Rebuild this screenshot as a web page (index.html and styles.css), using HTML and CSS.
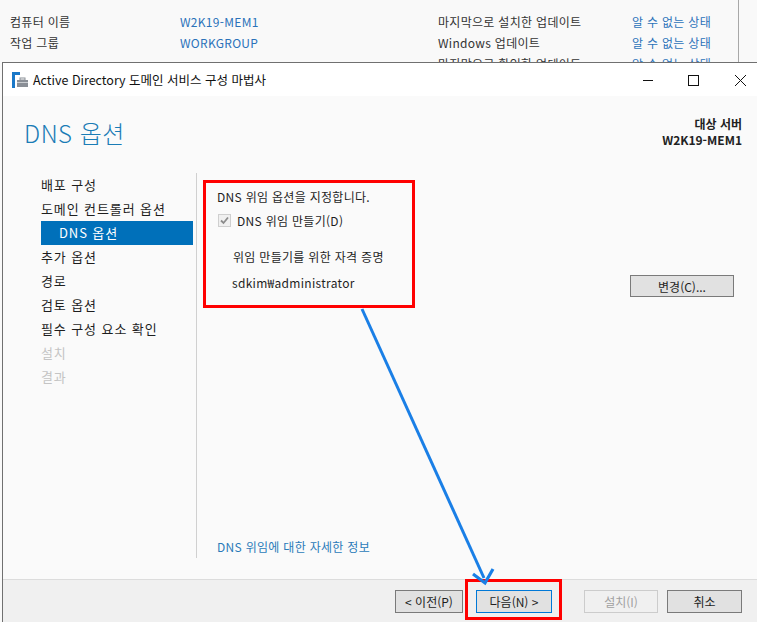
FILE: index.html
```html
<!DOCTYPE html>
<html lang="ko">
<head>
<meta charset="utf-8">
<title>Active Directory 도메인 서비스 구성 마법사</title>
<link rel="stylesheet" href="styles.css">
</head>
<body>
<div class="desk">
  <div class="props">
    <div class="prow"><span class="pl">컴퓨터 이름</span><span class="pv">W2K19-MEM1</span><span class="pl2">마지막으로 설치한 업데이트</span><span class="pv2">알 수 없는 상태</span></div>
    <div class="prow"><span class="pl">작업 그룹</span><span class="pv">WORKGROUP</span><span class="pl2">Windows 업데이트</span><span class="pv2">알 수 없는 상태</span></div>
    <div class="prow"><span class="pl"></span><span class="pv"></span><span class="pl2">마지막으로 확인한 업데이트</span><span class="pv2">알 수 없는 상태</span></div>
  </div>
  <div class="vline"></div>
</div>
<div class="window">
  <div class="titlebar">
    <svg class="appicon" width="16" height="16" viewBox="0 0 16 16">
      <rect x="0" y="0" width="3" height="16" fill="#1a78c8"/>
      <rect x="0" y="0" width="8" height="3" fill="#1a78c8"/>
      <rect x="5" y="8" width="11" height="7" fill="#8a8f96"/>
      <rect x="8" y="6" width="5" height="2" fill="none" stroke="#8a8f96" stroke-width="1"/>
      <rect x="5" y="10" width="11" height="1" fill="#c9ccd0"/>
    </svg>
    <span class="wtitle">Active Directory 도메인 서비스 구성 마법사</span>
    <div class="controls">
      <svg class="ctl" width="46" height="20" viewBox="0 0 46 20"><line x1="18" y1="10.5" x2="28" y2="10.5" stroke="#111" stroke-width="1"/></svg>
      <svg class="ctl" width="46" height="20" viewBox="0 0 46 20"><rect x="17.5" y="5.5" width="10" height="10" fill="none" stroke="#111" stroke-width="1"/></svg>
      <svg class="ctl" width="46" height="20" viewBox="0 0 46 20"><path d="M18 5 L29 16 M29 5 L18 16" stroke="#111" stroke-width="1"/></svg>
    </div>
  </div>
  <div class="wbody">
    <div class="header">
      <h1 class="ptitle">DNS 옵션</h1>
      <div class="target">
        <div>대상 서버</div>
        <div>W2K19-MEM1</div>
      </div>
    </div>
    <div class="main">
      <nav class="nav">
        <div class="nitem">배포 구성</div>
        <div class="nitem">도메인 컨트롤러 옵션</div>
        <div class="nitem sel">DNS 옵션</div>
        <div class="nitem">추가 옵션</div>
        <div class="nitem">경로</div>
        <div class="nitem">검토 옵션</div>
        <div class="nitem">필수 구성 요소 확인</div>
        <div class="nitem dis">설치</div>
        <div class="nitem dis">결과</div>
      </nav>
      <div class="sep"></div>
      <section class="content">
        <div class="toprow">
          <div class="redbox">
            <div class="line l1">DNS 위임 옵션을 지정합니다.</div>
            <label class="line chk"><span class="cbox"><svg width="11" height="11" viewBox="0 0 11 11"><path d="M2 5.5 L4.5 8 L9 2.5" fill="none" stroke="#8c8c8c" stroke-width="1.8"/></svg></span>DNS 위임 만들기(D)</label>
            <div class="line cred">위임 만들기를 위한 자격 증명</div>
            <div class="line user">sdkim₩administrator</div>
          </div>
          <button class="btn change">변경(C)...</button>
        </div>
        <a class="more">DNS 위임에 대한 자세한 정보</a>
      </section>
    </div>
  </div>
  <div class="footer">
    <button class="btn prev">&lt; 이전(P)</button>
    <div class="redwrap"><button class="btn next">다음(N) &gt;</button></div>
    <button class="btn install" disabled>설치(I)</button>
    <button class="btn cancel">취소</button>
  </div>
</div>
<svg class="arrow" width="757" height="622" viewBox="0 0 757 622">
  <line x1="362" y1="309" x2="484" y2="578" stroke="#1a7fe6" stroke-width="3"/>
  <path d="M473 574 L485 583 L493 569" fill="none" stroke="#1a7fe6" stroke-width="3.2" stroke-linejoin="miter"/>
</svg>
</body>
</html>
```

FILE: styles.css
```css
html, body {
  margin: 0;
  padding: 0;
}
body {
  width: 757px;
  height: 622px;
  overflow: hidden;
  background: #f9f9f9;
  font-family: "Noto Sans CJK KR", "Noto Sans", sans-serif;
  font-size: 12px;
  color: #1e1e1e;
  position: relative;
}
.desk {
  height: 62px;
  overflow: hidden;
  display: flex;
}
.props {
  padding-top: 11px;
  width: 738px;
}
.prow {
  display: flex;
  height: 21px;
  line-height: 21px;
  letter-spacing: 0.3px;
}
.pl { width: 170px; padding-left: 10px; color: #333; }
.pv { width: 258px; color: #2b72b9; }
.pl2 { width: 194px; color: #333; }
.pv2 { color: #2b72b9; }
.vline {
  width: 1px;
  background: #a8a8a8;
  height: 62px;
}
.window {
  margin-left: 2px;
  border-top: 1px solid #707070;
  border-left: 1px solid #707070;
  height: 559px;
  display: flex;
  flex-direction: column;
  background: #fafafa;
}
.titlebar {
  height: 33px;
  background: #ffffff;
  display: flex;
  align-items: center;
}
.appicon {
  margin-left: 9px;
  margin-top: 1px;
}
.wtitle {
  margin-left: 5px;
  font-size: 12.5px;
  letter-spacing: 0px;
  color: #111;
}
.controls {
  margin-left: auto;
  display: flex;
  margin-right: -6px;
}
.ctl { display: block; }
.wbody {
  flex: 1;
  display: flex;
  flex-direction: column;
}
.header {
  display: flex;
  justify-content: space-between;
  height: 77px;
}
.ptitle {
  margin: 0;
  margin-left: 21px;
  margin-top: 17px;
  font-weight: 300;
  font-size: 24px;
  line-height: 40px;
  color: #1a7cb6;
  letter-spacing: 0.5px;
}
.target {
  margin-top: 20px;
  margin-right: 15px;
  text-align: right;
  font-weight: bold;
  font-size: 12px;
  line-height: 16px;
  color: #222;
}
.main {
  display: flex;
  height: 385px;
}
.nav {
  margin-left: 38px;
  width: 152px;
}
.nitem {
  height: 24px;
  line-height: 24px;
  font-size: 13px;
  letter-spacing: 0.9px;
  color: #1e1e1e;
}
.nitem.sel {
  background: #0070ba;
  color: #fff;
  padding-left: 18px;
}
.nitem.dis { color: #c4c4c4; }
.sep {
  width: 1px;
  margin-left: 3px;
  background: #d0d0d0;
}
.content {
  flex: 1;
  display: flex;
  flex-direction: column;
  padding-left: 6px;
}
.toprow {
  display: flex;
  justify-content: space-between;
  margin-top: 7px;
}
.redbox {
  width: 206px;
  height: 122px;
  border: 3px solid #ff0000;
}
.line {
  display: flex;
  align-items: center;
  font-size: 12px;
  letter-spacing: 0.3px;
  color: #1e1e1e;
}
.l1 { padding-left: 11px; margin-top: 5px; height: 17px; }
.chk { padding-left: 12px; margin-top: 7px; height: 17px; }
.cbox {
  width: 13px;
  height: 13px;
  border: 1px solid #cfcfcf;
  background: #f0f0f0;
  box-sizing: border-box;
  margin-right: 6px;
  display: flex;
  align-items: center;
  justify-content: center;
}
.cred { padding-left: 27px; margin-top: 19px; height: 17px; }
.user { padding-left: 26px; margin-top: 9px; height: 17px; }
.btn {
  font-family: "Noto Sans CJK KR", "Noto Sans", sans-serif;
  font-size: 12px;
  color: #1e1e1e;
  background: #e1e1e1;
  border: 1px solid #adadad;
  padding: 0;
  height: 23px;
  box-sizing: border-box;
}
.change {
  width: 104px;
  height: 22px;
  margin-top: 95px;
  margin-right: 23px;
  border-color: #7a7a7a;
}
.more {
  margin-top: auto;
  margin-bottom: 3px;
  padding-left: 14px;
  color: #2a7ab9;
  font-size: 12px;
  letter-spacing: 0.3px;
  line-height: 17px;
}
.footer {
  height: 43px;
  border-top: 1px solid #dcdcdc;
  background: #f0f0f0;
  display: flex;
  align-items: flex-start;
  padding-top: 10px;
  box-sizing: border-box;
}
.prev { margin-left: 392px; width: 68px; border-color: #7a7a7a; }
.redwrap {
  margin-left: 2px;
  margin-top: -11px;
  border: 3px solid #ff0000;
  padding: 8px 7px 4px 8px;
  display: flex;
}
.next { width: 76px; border-color: #0078d7; }
.install {
  margin-left: 22px;
  width: 74px;
  background: #f0f0f0;
  border-color: #cccccc;
  color: #a0a0a0;
}
.cancel { margin-left: 9px; width: 75px; border-color: #7a7a7a; }
.arrow {
  position: absolute;
  left: 0;
  top: 0;
  pointer-events: none;
}
```
